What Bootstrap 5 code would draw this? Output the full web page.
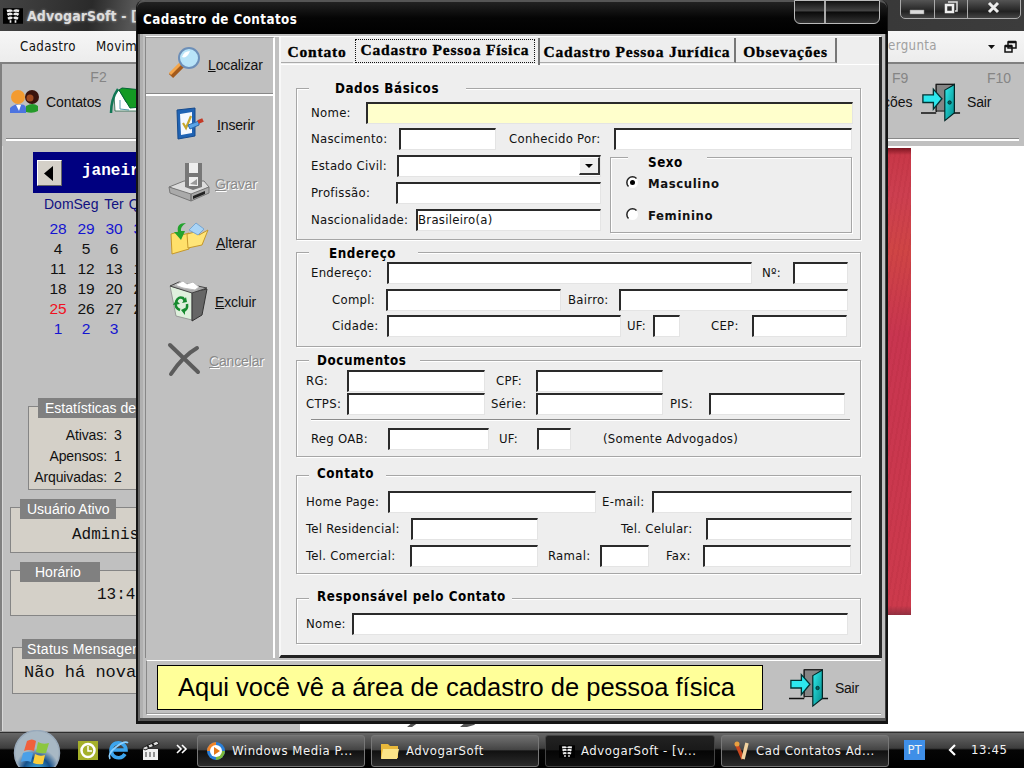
<!DOCTYPE html>
<html lang="pt-BR">
<head>
<meta charset="utf-8">
<title>AdvogarSoft</title>
<link href="https://cdn.jsdelivr.net/npm/bootstrap@5.3.0/dist/css/bootstrap.min.css" rel="stylesheet">
<style>
body{width:1024px;height:768px;overflow:hidden;background:#fff;font:13px/16px "DejaVu Sans Condensed","DejaVu Sans",sans-serif;color:#111;white-space:nowrap}
.ms{font-family:"Liberation Sans",Arial,sans-serif;font-size:14px}
svg{display:block;flex:none}
/* main window */
.titlebar{height:31px;background:linear-gradient(100deg,#444 0,#2a2a2a 9%,#555 13%,#333 60%,#3c3c3c);color:#ddd;font:bold 14px/16px "DejaVu Sans Condensed","DejaVu Sans",sans-serif;text-shadow:0 0 3px #aaa;padding-left:3px;letter-spacing:.1px}
.wctl{position:absolute;right:3px;top:-5px;width:121px;height:24px;border:1px solid #aaa;border-radius:5px;background:linear-gradient(#666,#222 70%,#444);overflow:hidden}
.wctl>span{border-right:1px solid #aaa;padding-top:4px}
.wctl>span:last-child{border:0}
.menus{height:31px;background:linear-gradient(#f6f6f6,#ececec);padding-left:20px;font-size:13.2px;letter-spacing:.35px}
.askbox{position:absolute;right:0;top:31px;width:136px;height:30px}
.tools{height:84px;background:#c0c0c0;border-top:2px solid #808080;border-left:2px solid #808080;position:relative}
.tools:after{content:"";position:absolute;left:4px;right:5px;bottom:5px;height:3px;background:#fff;border-top:1px solid #888}
.fkey{color:#858585}
.work{height:585px;background:#fff}
.leftpane{width:300px;background:#c0c0c0;border-left:2px solid #808080;box-shadow:inset 1px 0 #d8d8d8}
.cal{margin:6px 0 0 31px;width:240px}
.calhead{height:41px;background:#000080;color:#fff;font:bold 16px/16px "Liberation Mono",monospace;padding:0 0 4px 4px;gap:20px}
.calbtn{width:25px;height:26px;background:#d4d0c8;border:1px solid #fff;border-right-color:#666;border-bottom-color:#666;margin-top:5px}
.caldays{display:grid;grid-template-columns:28px 28px 28px 28px;grid-template-rows:25px repeat(5,20px);padding:1px 0 0 11px;text-align:center;font-size:15.5px;line-height:20px;color:#111}
.caldays b{font-weight:400;font-size:14px;color:#111180;line-height:20px}
.caldays i{font-style:normal;color:#1414d0}
.caldays u{text-decoration:none;color:#f01020}
.grp{position:relative;background:#d4d0c8;border:1px solid #858585;width:250px}
.grp>strong{position:absolute;top:-9px;left:9px;height:20px;line-height:20px;background:#808080;color:#fff;font-weight:400;padding:0 7px}
.g-stat{margin:67px 0 0 26px;height:84px;padding-top:18px}
.g-stat div{display:grid;grid-template-columns:78px 20px;column-gap:7px;text-align:right;line-height:21px;letter-spacing:-.1px}
.g-stat div span:last-child{text-align:left}
.g-user{margin:17px 0 0 8px;height:46px}
.g-hour{margin:17px 0 0 8px;height:46px}
.g-stts{margin:31px 0 0 10px;height:47px}
.grp p{margin:0;font:16px/18px "Liberation Mono",monospace}
.book{width:24px;height:467px;margin:2px 0 0 587px;background:repeating-linear-gradient(100deg,#0000 0 3px,#a0203020 3px 5px),linear-gradient(#7a1520,#c83848 1.5%,#cc3f50 10%,#cf4545 22%,#c83550 40%,#cc3a4c 98%,#903040)}
/* dialog */
.dlg{position:absolute;left:136px;top:0;width:752px;height:724px;border-radius:8px 8px 0 0;background:#c0c0c0;border:solid #141414;border-width:0 2px 3px 2px;box-shadow:inset 2px 0 #666,inset -1px 0 #444,inset 0 -3px #555,inset 5px 0 #b0b0b0}
.dlgtitle{height:34px;margin:0 -1px;background:linear-gradient(#222,#050505 50%,#000);border-radius:8px 8px 0 0;border-top:2px solid #555;color:#fff;font-weight:700;font-size:13.3px;letter-spacing:.42px;padding:11px 6px;line-height:14px}
.dctl{position:absolute;right:6px;top:0;width:86px;height:24px;border:1.5px solid #bbb;border-radius:0 0 6px 6px;background:linear-gradient(#111,#444 45%,#0a0a0a 50%,#333)}
.dctl span{display:block;width:31px;height:100%;border-right:2px solid #aaa}
.dlgbody{margin:2px 5px 0 7px;height:622px;border-top:1px solid #fff;border-left:1px solid #888}
.side{width:129px;border-right:2px solid #fff;border-top:1px solid #999;letter-spacing:-.15px}
.sbtn{position:relative;height:59px}
.sbtn svg{position:absolute}
.side .sbtn:first-child{height:58px;border-bottom:2px solid #fff;box-shadow:0 -1px #888 inset}
.sbtn span{position:absolute;top:21px}
.side .sbtn:first-child span{top:19px}
.off{color:#8a8a8a;text-shadow:1px 1px #fff}
.sbtn span::first-letter{text-decoration:underline}
.panel{margin-left:4px;width:603px;background:#eee;border-right:3px solid #2a2a2a;border-bottom:3px solid #222;border-left:2px solid #f8f8f8}
.tabrow{height:28px;border-bottom:1px solid #fff;font:bold 15.5px/20px "Liberation Serif",serif;letter-spacing:.8px;color:#000;-webkit-text-stroke:.35px #000;display:grid;grid-template-columns:72px 187px 196px 101px}
.tabrow span{text-align:center;border-right:2px solid #777;height:25px;padding-top:4px;margin-top:1px;border-bottom:1px solid #aaa}
.tabrow span:nth-child(1){border-right:0}
.tabrow .on{border:0;padding:1px 0 0;height:27px;border-right:2px solid #777}
.tabrow .on em{font-style:normal;display:block;border:1px dotted #111;height:24px;margin:0 3px 0 2px;line-height:20px}
.box{position:relative;border:1px solid #a6a6a6;box-shadow:1px 1px #fff,inset 1px 1px #fff;width:565px;margin-left:15px;padding-left:9px;letter-spacing:.28px}
.box>h6{position:absolute;margin:0;top:-9px;left:12px;font:bold 13.3px/17px "DejaVu Sans Condensed","DejaVu Sans",sans-serif;letter-spacing:.55px;background:#eee;color:#000}
.row-f{display:grid;height:22px;margin-top:5px;line-height:21px;align-items:start}
.in5{padding-left:5px}.in26{padding-left:26px}
.f{height:22px;background:#fff;border:2px solid #2a2a2a;border-right:1px solid #e4e4e4;border-bottom:1px solid #e4e4e4;line-height:17px}
.yel{background:#ffffcc}
/* group and row metrics */
.b1{margin-top:23px;height:152px}.b1>h6{width:157px;padding-left:26px}
.r11{grid-template-columns:55px 487px;margin-top:13px}
.r12{grid-template-columns:88px 97px 13px 105px 238px;margin-top:4px}
.r13{grid-template-columns:86px 204px}.r14{grid-template-columns:85px 205px}.r15{grid-template-columns:105px 185px}
.sexo{width:242px;height:76px;margin:7px 0 0 9px;padding:18px 0 0 15px;font-weight:700;letter-spacing:.6px}
.sexo>h6{left:17px;top:-4px;width:79px;padding-left:20px}
.opt{height:32px;gap:9px}
.dd{width:21px;height:18px;background:#eee;border:1px solid #fff;border-right:2px solid #333;border-bottom:2px solid #333;margin-left:auto}
.b2{margin-top:12px;height:95px}.b2>h6{width:109px;padding-left:20px;top:-8px}
.r21{grid-template-columns:76px 365px 10px 31px 55px;margin-top:9px}
.r22{grid-template-columns:54px 175px 7px 51px 229px}
.r23{grid-template-columns:55px 234px 6px 26px 27px 31px 41px 95px;margin-top:4px}
.b3{margin-top:13px;height:97px}.b3>h6{width:111px;padding-left:8px}
.r31{grid-template-columns:41px 138px 11px 40px 127px;margin-top:9px}
.r32{grid-template-columns:41px 138px 6px 45px 127px 7px 39px 136px;margin-top:1px}
.r34{grid-template-columns:77px 101px 10px 38px 34px 32px 150px;margin-top:7px}
.rule{height:2px;background:#fff;border-top:1px solid #8c8c8c;margin:4px 10px 0 5px}
.b4{margin-top:18px;height:99px}.b4>h6{width:77px;padding-left:8px;top:-11px}
.r41{grid-template-columns:82px 208px 6px 50px 200px;margin-top:15px}
.r42{grid-template-columns:105px 127px 83px 85px 146px}
.r43{grid-template-columns:104px 128px 10px 52px 49px 17px 37px 148px}
.b5{margin-top:24px;height:46px}.b5>h6{width:203px;padding-left:8px;top:-11px}
.r51{grid-template-columns:46px 496px;margin-top:14px}
.foot{margin:2px 5px 0 8px;height:55px;border-top:1px solid #fff;border-bottom:1px solid #fff;border-left:1px solid #888;box-shadow:0 -1px #999 inset}
.note{position:absolute;left:157px;top:665px;width:606px;height:45px;background:#ffff99;border:1.5px solid #000;color:#000;font:25.5px/42px "Liberation Sans",Arial,sans-serif;text-align:center;padding-right:7px}
/* taskbar */
.taskbar{height:37px;background:linear-gradient(#111 0,#666 4%,#3d3d3d 45%,#050505 50%,#000);border-top:1px solid #999;color:#f2f2f2;position:relative;padding-left:197px;font-size:13px;letter-spacing:.55px}
.task{width:168px;height:32px;margin:3px 6px 0 0;padding:0 8px;gap:6px;border:1px solid #777;border-radius:3px;background:linear-gradient(#707070,#454545 45%,#111 50%,#2c2c2c)}
.task.cur{background:linear-gradient(#222,#1a1a1a 45%,#050505 50%,#111);border-color:#444}
.lang{width:21px;height:20px;background:#3f8fe8;margin-left:9px;line-height:20px;letter-spacing:0}
.tb-i{position:absolute;left:0;top:-2px}
</style>
</head>
<body>
<svg width="0" height="0" class="position-absolute">
 <defs>
  <linearGradient id="gd" x1="0" y1="0" x2="1" y2="1"><stop offset="0" stop-color="#3ee"/><stop offset="1" stop-color="#088"/></linearGradient>
  <symbol id="door" viewBox="0 0 42 42"><path d="M0 32h16M16 31V2h19v28M33 32h8" fill="none" stroke="#111" stroke-width="1.400"/><path d="M16 2h19v28H16z" fill="#858585" stroke="#111"/><path d="M25 8 35 2v30l-10 8z" fill="url(#gd)" stroke="#022" stroke-width="1.200"/><circle cx="30" cy="21" r="1.800" fill="#066" stroke="#011" stroke-width=".7"/><path d="M2 13h11V7l9 10-9 11v-7H2z" fill="#2de8ee" stroke="#033" stroke-width="1.400"/></symbol>
  <symbol id="mark2" viewBox="0 0 18 14"><path d="M0 0h18v14H0z" fill="#000"/><path d="M3.500 2.500q4-1 4.500.500M4 6q3-2 4 0M4.500 9.500Q7 8 8 9.500M6 12h1.500M14.500 2.500q-4-1-4.500.500M14 6q-3-2-4 0M13.500 9.500Q11 8 10 9.500M12 12h-1.500" fill="none" stroke="#eee" stroke-width="2.300"/></symbol>
 </defs>
</svg>

<div class="titlebar position-relative d-flex align-items-center">
 <svg width="20" height="16" class="me-1"><use href="#mark2"/></svg><span>AdvogarSoft - [v</span>
 <div class="wctl d-flex">
  <span style="width:34px"><svg width="34" height="18"><path d="M9 10h14v4H9z" fill="#ddd" stroke="#888" stroke-width=".5"/></svg></span>
  <span style="width:33px"><svg width="33" height="18"><path d="M13 2h9v9h-2" fill="none" stroke="#ddd" stroke-width="1.500"/><path d="M11 5h7v7h-7z" fill="none" stroke="#eee" stroke-width="2.500"/></svg></span>
  <span style="width:53px"><svg width="53" height="18"><path d="m21 3 9 9M30 3 21 12" stroke="#eee" stroke-width="3"/></svg></span>
 </div>
</div>
<div class="menus d-flex align-items-center"><span style="width:76px">Cadastro</span><span>Movimentos</span>
 <div class="askbox d-flex align-items-center"><span style="color:#a0a0a0">ergunta</span>
  <svg width="40" height="16" class="ms-auto"><path d="M4 7h7l-3.500 4z" fill="#111"/><path d="M24 4h8v6h-8zM21 8h7v6h-7z" fill="#eee" stroke="#111" stroke-width="1.500"/><path d="M24 4h8M21 8h7" stroke="#111" stroke-width="2.500"/></svg></div>
</div>
<div class="tools ms d-flex">
 <svg width="34" height="30" class="mt-4 ms-1"><circle cx="12" cy="9" r="7" fill="#f39b30"/><circle cx="26" cy="9" r="7" fill="#3a130c"/><circle cx="24" cy="10" r="3.500" fill="#a04a20"/><path d="M4 25v-5q5-5 9-3 6-2 7 3v5z" fill="#4d74e0"/><path d="M10 17h5l-2 6z" fill="#fff"/><path d="M20 24v-6q7-4 12 0v5q-5 3-12 1z" fill="#259a2a"/></svg>
 <div style="width:62px;padding-left:2px" class="ms-1"><div class="fkey text-center" style="padding:5px 0 0 31px;width:74px">F2</div><div style="margin-top:9px;letter-spacing:-.1px">Contatos</div></div>
 <svg width="34" height="34" style="margin:21px 0 0 2px"><path d="m6 10 5-5 7 12 12 6v3H7z" fill="#fff" stroke="#264" stroke-width=".8"/><path d="m11 5 3-2 20 2v17l-12 1z" fill="#149a23" stroke="#063"/><path d="M10 4Q3 14 3 28" stroke="#175" stroke-width="2.500" fill="none"/><path d="M12 15v9l9 1" stroke="#59a" fill="none"/></svg>
 <div class="position-absolute d-flex" style="left:886px;top:0;width:138px">
  <div style="width:30px"><div class="fkey" style="padding:6px 0 0 4px">F9</div><div style="margin-top:8px;margin-left:-5px">ções</div></div>
  <svg width="40" height="41" style="margin:18px 0 0 3px"><use href="#door"/></svg>
  <div class="ms-2"><div class="fkey" style="padding:6px 0 0 18px">F10</div><div style="margin-top:8px;margin-left:-2px;letter-spacing:-.2px">Sair</div></div>
 </div>
</div>
<div class="work d-flex">
 <div class="leftpane ms flex-shrink-0">
  <div class="cal">
   <div class="calhead d-flex align-items-center"><div class="calbtn"><svg width="22" height="23"><path d="M15 5v15L6 12.500z" fill="#000"/></svg></div><span>janeiro</span></div>
   <div class="caldays"><b>Dom</b><b>Seg</b><b>Ter</b><b>Qua</b><i>28</i><i>29</i><i>30</i><i>31</i><span>4</span><span>5</span><span>6</span><span>7</span><span>11</span><span>12</span><span>13</span><span>14</span><span>18</span><span>19</span><span>20</span><span>21</span><u>25</u><span>26</span><span>27</span><span>28</span><i>1</i><i>2</i><i>3</i></div>
  </div>
  <div class="grp g-stat"><strong>Estatísticas de</strong><div><span>Ativas:</span><span>3</span></div><div><span>Apensos:</span><span>1</span></div><div><span>Arquivadas:</span><span>2</span></div></div>
  <div class="grp g-user"><strong>Usuário Ativo</strong><p style="padding:18px 0 0 61px">Administrador</p></div>
  <div class="grp g-hour"><strong style="padding:0 19px 0 15px">Horário</strong><p style="padding:15px 0 0 86px">13:45</p></div>
  <div class="grp g-stts"><strong style="padding:0 5px;letter-spacing:.3px">Status Mensagem</strong><p style="padding:16px 0 0 11px;font-size:17px">Não há novas</p></div>
 </div>
 <div class="flex-grow-1 position-relative">
  <div class="book"></div>
  <svg width="70" height="8" class="position-absolute" style="left:105px;bottom:3px"><path d="M2 7 8 2h6L7 7zM55 7l6-5h12l-4 3-7 2z" fill="#555"/></svg>
 </div>
</div>

<div class="taskbar d-flex">
 <div class="tb-i"><svg width="198" height="37">
  <defs><radialGradient id="orb" cy=".9"><stop offset="0" stop-color="#4be"/><stop offset=".6" stop-color="#15508a"/><stop offset="1" stop-color="#a8b8c4"/></radialGradient></defs>
  <circle cx="37" cy="23" r="22.500" fill="url(#orb)" stroke="#9ab" stroke-width="1.500"/>
  <path d="M27 11q5-3 9 0l-2 10q-5-2-10 0z" fill="#f0603c"/><path d="M38 12q5 3 11 1l-3 10q-5 1-10-1z" fill="#8cc63f"/><path d="M23 23q5-2 10 0l-2 9q-5-2-10 0z" fill="#4ba0e8"/><path d="M35 24q5 3 10 1l-2 9q-5 1-10-1z" fill="#fccf3c"/>
  <path d="M78 11h20v19H78z" fill="#a5b02a"/><circle cx="88" cy="20.500" r="6.500" fill="none" stroke="#fff" stroke-width="2.500"/><path d="M88 16v5h4" stroke="#fff" stroke-width="1.500" fill="none"/>
  <path d="M125 24a7.500 7.500 0 1 1 1-4h-13" fill="none" stroke="#3ca5ee" stroke-width="3.600"/><path d="M110 29q-3-5 6-12 9-7 12-4" fill="none" stroke="#8cd0ff" stroke-width="1.700"/>
  <path d="M143 19h15v11h-15z" fill="#eee"/><path d="m142 18 15-7 2 3-14 6z" fill="#ddd" stroke="#222"/><path d="M146 22v5M150 22v5M154 22v5" stroke="#333"/><path d="m147 15 2 3M152 13l2 3" stroke="#222" stroke-width="2"/>
  <path d="m177 15 4 4-4 4M182 15l4 4-4 4" fill="none" stroke="#fff" stroke-width="1.600"/></svg></div>
 <div class="task d-flex align-items-center"><svg width="20" height="20"><circle cx="10" cy="10" r="9" fill="#2a7fd8"/><path d="M10 1a9 9 0 0 0-9 9h9z" fill="#f08428"/><path d="M10 19a9 9 0 0 0 9-9h-9z" fill="#7bb83a"/><circle cx="10" cy="10" r="6" fill="#fff"/><path d="m8 6 6 4-6 4z" fill="#e57818"/></svg><span>Windows Media P...</span></div>
 <div class="task d-flex align-items-center"><svg width="20" height="18"><path d="M1 2h7l2 2h8v12H1z" fill="#e9b83a"/><path d="M3 7h16l-2 10H1z" fill="#fbe488"/></svg><span>AdvogarSoft</span></div>
 <div class="task cur d-flex align-items-center" style="padding-left:13px;width:170px"><svg width="16" height="13"><use href="#mark2"/></svg><span>AdvogarSoft - [v...</span></div>
 <div class="task d-flex align-items-center" style="padding-left:12px"><svg width="16" height="20"><path d="m2 2 7 16" stroke="#c8471f" stroke-width="3.500"/><path d="M13 2 9 18" stroke="#f1d2a0" stroke-width="3.500"/><circle cx="3" cy="3" r="2.500" fill="#e8a040"/></svg><span>Cad Contatos Ad...</span></div>
 <div class="d-flex align-items-center"><div class="lang text-center">PT</div><svg width="10" height="12" style="margin:0 14px 0 22px"><path d="M8 1 3 6l5 5" fill="none" stroke="#fff" stroke-width="2.200"/></svg><span>13:45</span></div>
</div>

<div class="dlg">
 <div class="dlgtitle">Cadastro de Contatos</div>
 <div class="dctl"><span></span></div>
 <div class="dlgbody d-flex">
  <div class="side ms flex-shrink-0">
   <div class="sbtn"><svg width="40" height="40" style="left:20px;top:7px"><path d="M5 31 17 19" stroke="#a35a1c" stroke-width="6"/><path d="M4 29 15 18" stroke="#f5a64a" stroke-width="3"/><circle cx="23" cy="13" r="10" fill="#b9e4f8" stroke="#6d8fb8" stroke-width="2"/><path d="M16 12q2-6 8-6-3 8-8 6z" fill="#fff"/></svg><span style="left:62px">Localizar</span></div>
   <div class="sbtn"><svg width="40" height="40" style="left:28px;top:10px"><path d="M3 4 21 2v28L4 33z" fill="#1f63b4" stroke="#164a8c"/><path d="m6 8 12-2v21L7 29z" fill="#f4f8ff"/><path d="m9 17 3 5 5-12" fill="none" stroke="#c6a72b" stroke-width="2.200"/><path d="m14 19 11-4v4l-9 4z" fill="#5aa4e8" stroke="#2a68ac"/><path d="m24 16 5-2" stroke="#c43a26" stroke-width="4"/></svg><span style="left:71px">Inserir</span></div>
   <div class="sbtn"><svg width="44" height="42" style="left:22px;top:7px"><path d="m1 25 15-6h20l5 6-18 9z" fill="#ddd" stroke="#777"/><path d="m1 25 22 7v7L2 31zM23 32l18-7v6l-18 8z" fill="#aaa" stroke="#777"/><path d="m25 34 12-5v3l-12 5z" fill="#222"/><path d="M17 1h17v24l-9 3-8-3z" fill="#777"/><path d="M21 1h9v10h-9zM21 15h9v9h-9z" fill="#eee"/><path d="m22 22 7-5v6z" fill="#999"/></svg><span class="off" style="left:69px">Gravar</span></div>
   <div class="sbtn"><svg width="44" height="40" style="left:23px;top:7px"><path d="m2 13 7-2 4 3 7-2v16L3 33z" fill="#ffe06a" stroke="#c5972b"/><path d="m18 13 8-2 4 3 9-5-6 15-14 3z" fill="#ffe578" stroke="#c5972b"/><path d="m20 9 7-7 8 6-6 6z" fill="#a9d4f6" stroke="#78a6d0"/><path d="M17 2Q7 2 9 11H5l7 8 4-9h-4q-1-4 5-8z" fill="#23a32d"/></svg><span style="left:70px">Alterar</span></div>
   <div class="sbtn"><svg width="44" height="46" style="left:22px;top:6px"><path d="M2 7 24 13v28L8 37z" fill="#dff0dd" stroke="#999"/><path d="m24 13 15-3-5 26-10 6z" fill="#666" stroke="#333"/><path d="m2 7 9-4 28 6-15 5z" fill="#aaa" stroke="#444"/><path d="m7 6 8-4 4 3 6-2 6 5-4 3-12-2z" fill="#fff" stroke="#bbb"/><path d="M8 23q2-6 7-4l2 3M19 25q1 6-4 7M12 31q-5-2-4-6" fill="none" stroke="#168a2f" stroke-width="2.500"/><path d="m14 24 5-1-1-5zM17 29l-4 2 4 5zM5 26l3-5 4 4z" fill="#168a2f"/></svg><span style="left:69px">Excluir</span></div>
   <div class="sbtn"><svg width="36" height="36" style="left:21px;top:10px"><path d="m3 3 28 27M30 6Q16 14 4 32" fill="none" stroke="#5c5c5c" stroke-width="4" stroke-linecap="round"/></svg><span class="off" style="left:63px">Cancelar</span></div>
  </div>
  <div class="panel flex-shrink-0">
   <div class="tabrow"><span>Contato</span><span class="on"><em>Cadastro Pessoa Física</em></span><span>Cadastro Pessoa Jurídica</span><span>Obsevações</span></div>

   <div class="box b1"><h6>Dados Básicos</h6>
    <div class="row-f r11 in5"><span>Nome:</span><div class="f yel"></div></div>
    <div class="row-f r12 in5"><span>Nascimento:</span><div class="f"></div><i></i><span>Conhecido Por:</span><div class="f"></div></div>
    <div class="d-flex">
     <div>
      <div class="row-f r13 in5"><span>Estado Civil:</span><div class="f"><div class="dd"><svg width="18" height="15"><path d="M5 6h8l-4 4z" fill="#000"/></svg></div></div></div>
      <div class="row-f r14 in5"><span>Profissão:</span><div class="f"></div></div>
      <div class="row-f r15 in5"><span>Nascionalidade:</span><div class="f">Brasileiro(a)</div></div>
     </div>
     <div class="box sexo"><h6>Sexo</h6>
      <div class="opt d-flex"><svg width="13" height="13"><circle cx="6.500" cy="6.500" r="5.500" fill="#fff"/><path d="M2.500 10.500A5.500 5.500 0 0 1 10.500 2.500" fill="none" stroke="#222" stroke-width="1.500"/><circle cx="6.500" cy="6.500" r="2.500"/></svg><span>Masculino</span></div>
      <div class="opt d-flex"><svg width="13" height="13"><circle cx="6.500" cy="6.500" r="5.500" fill="#fff"/><path d="M2.500 10.500A5.500 5.500 0 0 1 10.500 2.500" fill="none" stroke="#222" stroke-width="1.500"/></svg><span>Feminino</span></div>
     </div>
    </div>
   </div>

   <div class="box b2"><h6>Endereço</h6>
    <div class="row-f r21 in5"><span>Endereço:</span><div class="f"></div><i></i><span>Nº:</span><div class="f"></div></div>
    <div class="row-f r22 in26"><span>Compl:</span><div class="f"></div><i></i><span>Bairro:</span><div class="f"></div></div>
    <div class="row-f r23 in26"><span>Cidade:</span><div class="f"></div><i></i><span>UF:</span><div class="f"></div><i></i><span>CEP:</span><div class="f"></div></div>
   </div>

   <div class="box b3"><h6>Documentos</h6>
    <div class="row-f r31"><span>RG:</span><div class="f"></div><i></i><span>CPF:</span><div class="f"></div></div>
    <div class="row-f r32"><span>CTPS:</span><div class="f"></div><i></i><span>Série:</span><div class="f"></div><i></i><span>PIS:</span><div class="f"></div></div>
    <div class="rule"></div>
    <div class="row-f r34 in5"><span>Reg OAB:</span><div class="f"></div><i></i><span>UF:</span><div class="f"></div><i></i><span>(Somente Advogados)</span></div>
   </div>

   <div class="box b4"><h6>Contato</h6>
    <div class="row-f r41"><span>Home Page:</span><div class="f"></div><i></i><span>E-mail:</span><div class="f"></div></div>
    <div class="row-f r42"><span>Tel Residencial:</span><div class="f"></div><i></i><span>Tel. Celular:</span><div class="f"></div></div>
    <div class="row-f r43"><span>Tel. Comercial:</span><div class="f"></div><i></i><span>Ramal:</span><div class="f"></div><i></i><span>Fax:</span><div class="f"></div></div>
   </div>

   <div class="box b5"><h6>Responsável pelo Contato</h6>
    <div class="row-f r51"><span>Nome:</span><div class="f"></div></div>
   </div>
  </div>
 </div>
 <div class="foot ms d-flex justify-content-end align-items-center"><svg width="40" height="42" style="margin-right:6px"><use href="#door"/></svg><span style="margin-right:22px;letter-spacing:-.2px">Sair</span></div>
</div>
<div class="note">Aqui você vê a área de cadastro de pessoa física</div>
<script src="https://cdn.jsdelivr.net/npm/bootstrap@5.3.0/dist/js/bootstrap.bundle.min.js"></script>
</body>
</html>
